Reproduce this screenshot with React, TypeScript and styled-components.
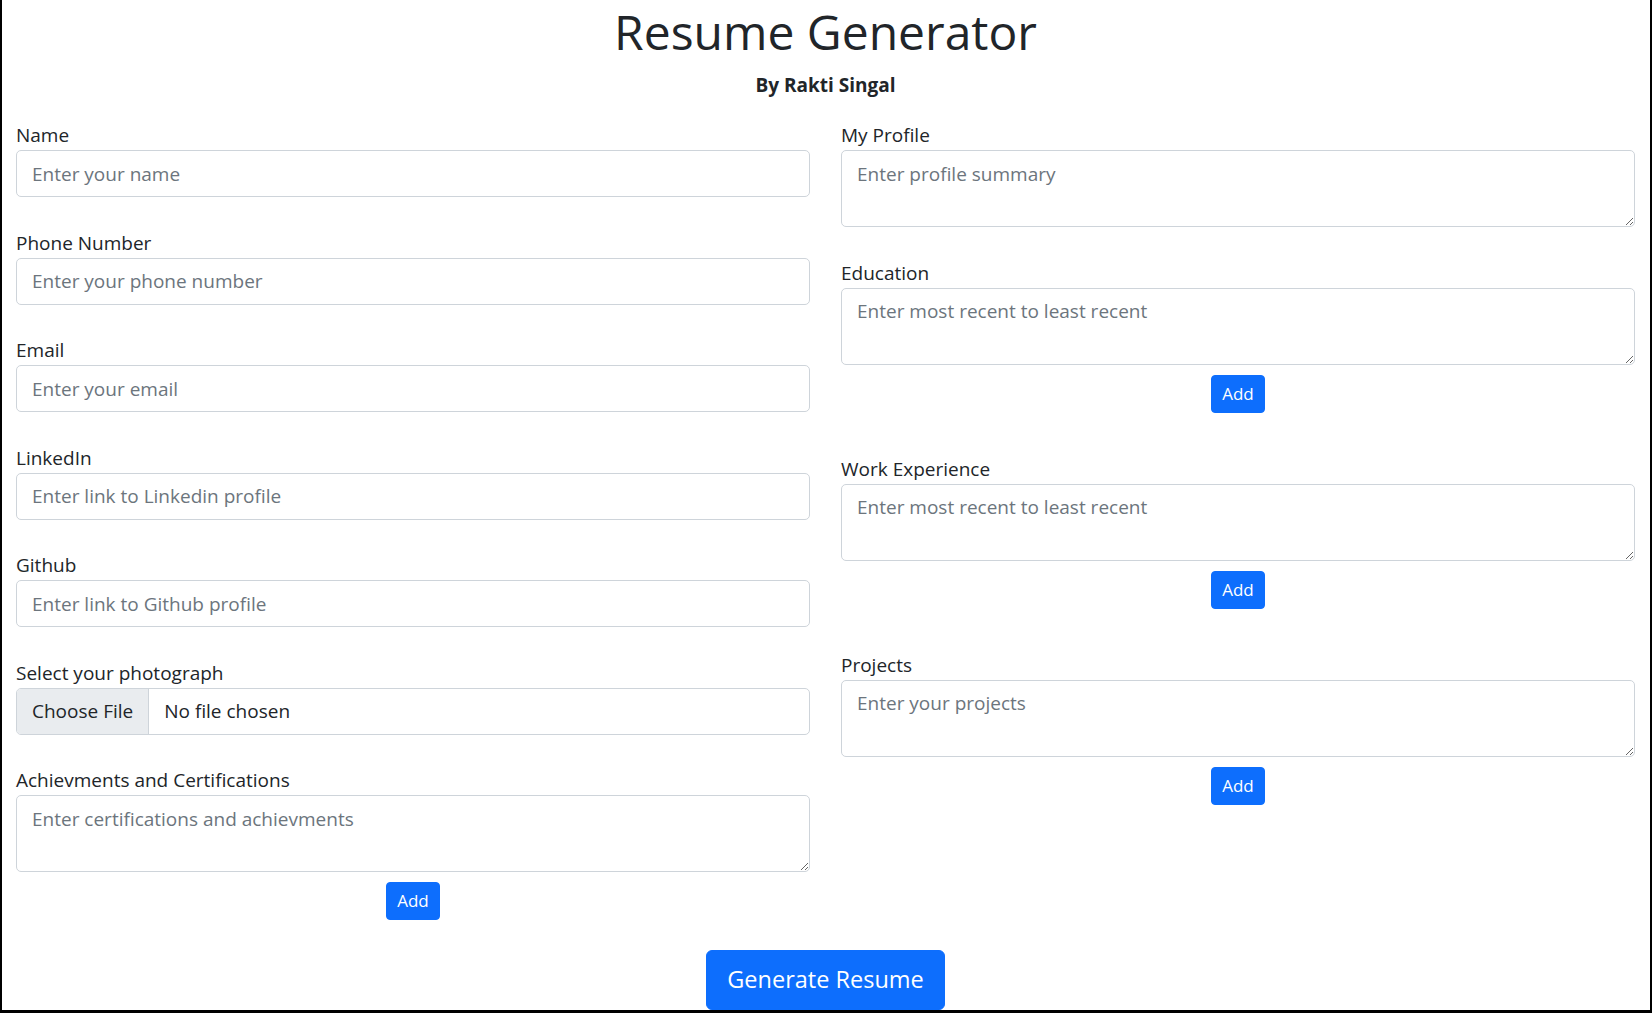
import styled, { createGlobalStyle } from 'styled-components';

const GlobalStyle = createGlobalStyle`
  html, body {
    margin: 0;
    padding: 0;
    background: #fff;
  }
  body {
    font-family: 'Open Sans', 'Noto Sans', sans-serif;
    color: #212529;
  }
  *, *::before, *::after {
    box-sizing: border-box;
  }
`;

const Page = styled.div`
  height: 100vh;
  overflow: hidden;
  border-left: 2px solid #000;
  border-right: 2px solid #000;
  border-bottom: 3px solid #000;
  padding: 0 15px 0 14px;
`;

const Title = styled.h1`
  margin: 0 0 6px;
  font-size: 48px;
  font-weight: 500;
  line-height: 64px;
  text-align: center;
  color: #212529;
`;

const Byline = styled.p`
  margin: 0 0 20px;
  font-size: 19px;
  font-weight: 700;
  line-height: 30px;
  text-align: center;
`;

const Columns = styled.div`
  display: grid;
  grid-template-columns: 1fr 1fr;
  column-gap: 31px;
`;

const Column = styled.div`
  display: flex;
  flex-direction: column;
`;

const Group = styled.div<{ $space?: number }>`
  margin-bottom: ${({ $space }) => $space ?? 30.5}px;
`;

const Label = styled.label`
  display: block;
  font-size: 19px;
  line-height: 30px;
`;

const Input = styled.input`
  display: block;
  width: 100%;
  height: 47px;
  padding: 7.5px 15px;
  font-family: inherit;
  font-size: 19px;
  line-height: 30px;
  color: #212529;
  background: #fff;
  border: 1px solid #ced4da;
  border-radius: 5px;
  outline: none;
  &::placeholder {
    color: #6c757d;
  }
`;

const FileInput = styled(Input)`
  overflow: hidden;
  &::file-selector-button {
    height: 45px;
    margin: -7.5px 15px -7.5px -15px;
    padding: 7.5px 15px;
    font-family: inherit;
    font-size: 19px;
    line-height: 30px;
    color: #212529;
    background: #e9ecef;
    border: 0;
    border-right: 1px solid #ced4da;
    border-radius: 0;
  }
`;

const TextArea = styled.textarea`
  display: block;
  width: 100%;
  height: 77px;
  padding: 7.5px 15px;
  font-family: inherit;
  font-size: 19px;
  line-height: 30px;
  color: #212529;
  background: #fff;
  border: 1px solid #ced4da;
  border-radius: 5px;
  outline: none;
  resize: vertical;
  &::placeholder {
    color: #6c757d;
  }
`;

const AddRow = styled.div`
  display: flex;
  justify-content: center;
  margin-top: 10px;
`;

const AddButton = styled.button`
  height: 38px;
  padding: 5px 10px;
  font-family: inherit;
  font-size: 17px;
  line-height: 26px;
  color: #fff;
  background: #0d6efd;
  border: 1px solid #0d6efd;
  border-radius: 4px;
  cursor: pointer;
`;

const Footer = styled.div`
  display: flex;
  justify-content: center;
`;

const GenerateButton = styled.button`
  height: 60px;
  padding: 10px 20px;
  font-family: inherit;
  font-size: 23.5px;
  line-height: 37.5px;
  color: #fff;
  background: #0d6efd;
  border: 1px solid #0d6efd;
  border-radius: 6px;
  cursor: pointer;
`;

const leftFields = [
  { label: 'Name', placeholder: 'Enter your name' },
  { label: 'Phone Number', placeholder: 'Enter your phone number' },
  { label: 'Email', placeholder: 'Enter your email' },
  { label: 'LinkedIn', placeholder: 'Enter link to Linkedin profile' },
  { label: 'Github', placeholder: 'Enter link to Github profile' },
];

const rightSections = [
  { label: 'Education', placeholder: 'Enter most recent to least recent' },
  { label: 'Work Experience', placeholder: 'Enter most recent to least recent' },
  { label: 'Projects', placeholder: 'Enter your projects' },
];

function App() {
  return (
    <>
      <GlobalStyle />
      <Page>
        <Title>Resume Generator</Title>
        <Byline>By Rakti Singal</Byline>
        <Columns>
          <Column>
            {leftFields.map((f) => (
              <Group key={f.label}>
                <Label>{f.label}</Label>
                <Input type='text' placeholder={f.placeholder} />
              </Group>
            ))}
            <Group>
              <Label>Select your photograph</Label>
              <FileInput type='file' />
            </Group>
            <Group $space={30}>
              <Label>Achievments and Certifications</Label>
              <TextArea placeholder='Enter certifications and achievments' />
              <AddRow>
                <AddButton>Add</AddButton>
              </AddRow>
            </Group>
          </Column>
          <Column>
            <Group>
              <Label>My Profile</Label>
              <TextArea placeholder='Enter profile summary' />
            </Group>
            {rightSections.map((s) => (
              <Group key={s.label} $space={41}>
                <Label>{s.label}</Label>
                <TextArea placeholder={s.placeholder} />
                <AddRow>
                  <AddButton>Add</AddButton>
                </AddRow>
              </Group>
            ))}
          </Column>
        </Columns>
        <Footer>
          <GenerateButton>Generate Resume</GenerateButton>
        </Footer>
      </Page>
    </>
  );
}

export default App;
